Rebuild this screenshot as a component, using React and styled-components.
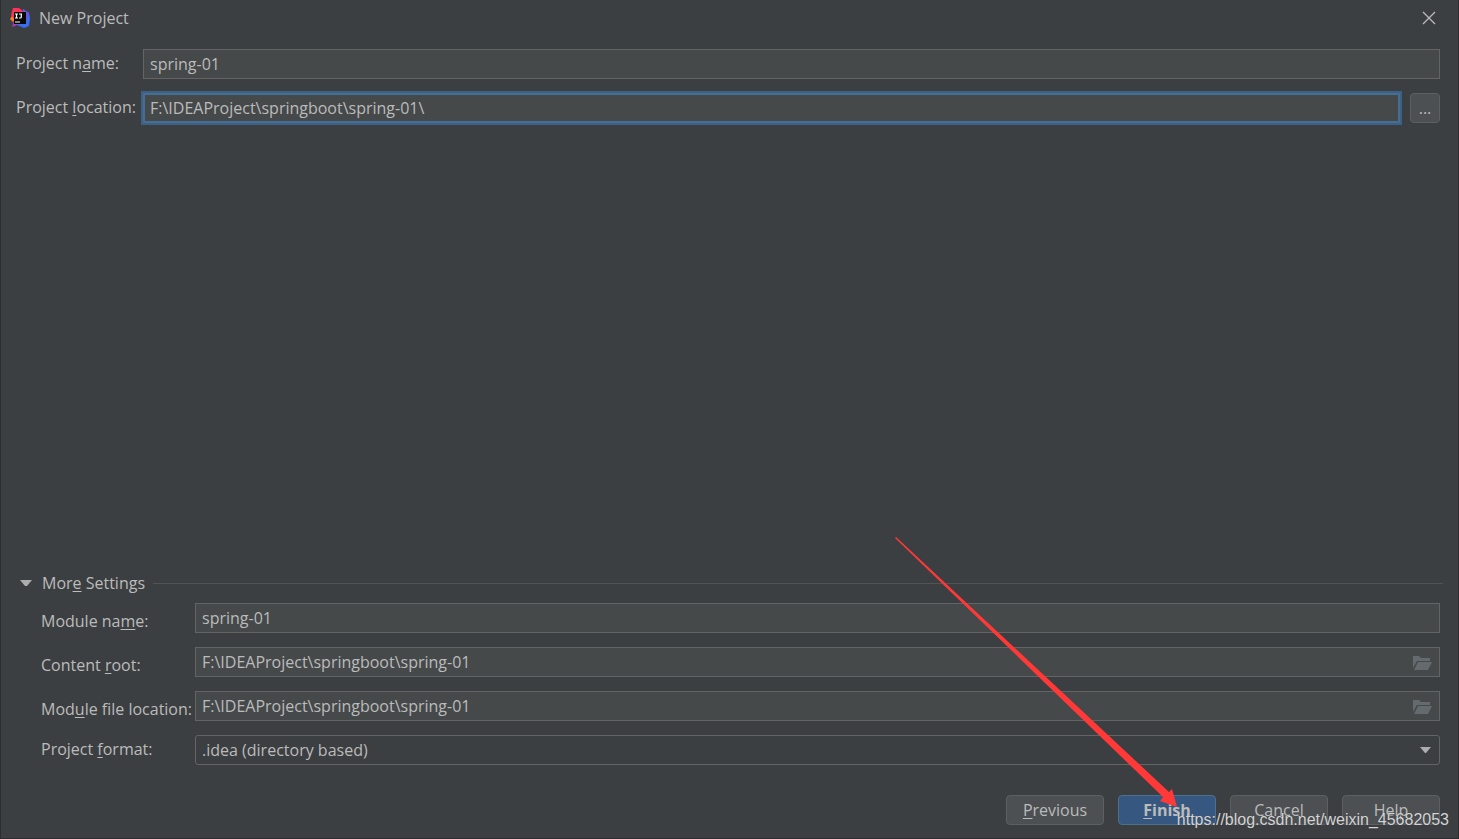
import React, { useState } from 'react';
import styled, { createGlobalStyle } from 'styled-components';

const GlobalStyle = createGlobalStyle`
  * {
    box-sizing: border-box;
  }

  body {
    margin: 0;
    background: #3c3f41;
    color: #bbbbbb;
    font-family: 'Open Sans', 'Noto Sans', sans-serif;
    font-size: 16px;
    line-height: 22px;
  }

  button,
  input,
  select {
    font: inherit;
    color: inherit;
  }
`;

const Dialog = styled.div`
  position: relative;
  min-height: 100vh;
  display: flex;
  flex-direction: column;
  overflow: hidden;
  border: 1px solid #2b2d2f;
  border-top: none;
`;

const TitleBar = styled.header`
  display: flex;
  align-items: center;
  gap: 8px;
  height: 36px;
  padding: 0 22px 0 8px;
`;

const Title = styled.h1`
  flex: 1;
  margin: 0;
  font-size: 16px;
  font-weight: 400;
`;

const CloseButton = styled.button`
  display: flex;
  padding: 0;
  border: none;
  background: none;
`;

const ProjectForm = styled.form`
  flex: 1;
  display: flex;
  flex-direction: column;
  padding: 13px 18px 13px 15px;
`;

const ProjectFields = styled.div`
  display: grid;
  grid-template-columns: 119px 1fr;
  gap: 14px 8px;
`;

const Label = styled.label`
  padding-top: ${(props) => (props.$low ? '7px' : '3px')};
  white-space: nowrap;
`;

const Mnemonic = styled.span`
  text-decoration: underline;
  text-decoration-skip-ink: none;
  text-underline-offset: 2px;
`;

const FieldRow = styled.div`
  display: flex;
  gap: 10px;
`;

const TextField = styled.input`
  flex: 1;
  min-width: 0;
  width: 100%;
  height: 30px;
  padding: 0 7px 1px 6px;
  border: 1px solid ${(props) => (props.$active ? '#466d94' : '#646464')};
  border-radius: 0;
  background: #45494a;
  outline: none;
  box-shadow: ${(props) => (props.$active ? '0 0 0 2px #3d6185, inset 0 0 0 1px #466d94' : 'none')};
`;

const BrowseButton = styled.button`
  width: 30px;
  height: 30px;
  padding: 0;
  border: 1px solid #5e6060;
  border-radius: 4px;
  background: #4c5052;
`;

const PathField = styled.div`
  position: relative;
  display: flex;
`;

const FolderButton = styled.button`
  position: absolute;
  top: 9px;
  right: 8px;
  display: flex;
  padding: 0;
  border: none;
  background: none;
`;

const MoreSettings = styled.section`
  margin-top: auto;
`;

const SectionToggle = styled.button`
  display: flex;
  align-items: center;
  gap: 10px;
  width: 100%;
  padding: 0 0 0 4px;
  border: none;
  background: none;
  text-align: left;
`;

const SectionTitle = styled.span`
  display: flex;
  flex: 1;
  align-items: center;
  gap: 8px;
  margin-right: -3px;
  white-space: pre;

  &::after {
    content: '';
    flex: 1;
    height: 1px;
    background: #515456;
  }
`;

const ModuleFields = styled.div`
  display: grid;
  grid-template-columns: 150px 1fr;
  gap: 14px 4px;
  padding: 9px 0 0 25px;
`;

const SelectBox = styled.div`
  position: relative;
  display: flex;
`;

const Select = styled.select`
  width: 100%;
  height: 30px;
  padding: 0 30px 0 6px;
  border: 1px solid #646464;
  border-radius: 3px;
  background: #3c3f41;
  appearance: none;
  outline: none;
`;

const SelectArrow = styled.svg`
  position: absolute;
  top: 12px;
  right: 9px;
  pointer-events: none;
`;

const Actions = styled.footer`
  display: flex;
  justify-content: flex-end;
  gap: 14px;
  margin-top: 30px;
`;

const ActionButton = styled.button`
  width: 98px;
  height: 30px;
  padding: 0;
  border: 1px solid ${(props) => (props.$primary ? '#4c708c' : '#5e6060')};
  border-radius: 4px;
  background: ${(props) => (props.$primary ? '#365880' : '#4c5052')};
  font-weight: ${(props) => (props.$primary ? 700 : 400)};
`;

const Pointer = styled.svg`
  position: absolute;
  right: 279px;
  bottom: 27px;
  pointer-events: none;
`;

const Watermark = styled.span`
  position: absolute;
  right: 9px;
  bottom: 7px;
  color: #d2d3d4;
  font-family: 'Liberation Sans', Arial, sans-serif;
  text-shadow: 0 1px 1px #3c3f41;
  pointer-events: none;
`;

const AppIcon = () => (
  <svg width="22" height="22" viewBox="0 0 22 22" aria-hidden="true">
    <path d="M4 7 1 12l3 3 4-2z" fill="#fc801d" />
    <path d="M4 1h6l4 3-2 5-7 3-3-4z" fill="#fe315d" />
    <path d="M5 13 3 20l5-2 4-3z" fill="#a93bb5" />
    <path d="M14 2l6 4 1 5-1 8-5 2-7-3 5-6z" fill="#3a6cf0" />
    <path d="M14 2l6 4-1 6-5-3z" fill="#6755dc" />
    <path d="M5 5h12v12H5z" fill="#080808" />
    <path d="M6 7h3M7.5 7v4M6 11h3M10 7h3M12.3 7v3q0 1-1 1H10M6 15h5" stroke="#fff" strokeWidth="1.2" fill="none" />
  </svg>
);

const DownTriangle = () => (
  <svg width="12" height="8" viewBox="0 0 12 8" aria-hidden="true">
    <path d="M0 1h12L7 7H5z" fill="#adadad" />
  </svg>
);

const FolderIcon = () => (
  <svg width="19" height="15" viewBox="0 0 19 15" aria-hidden="true">
    <path d="M0 0h6l2 2h9v3H4L0 12z" fill="#646a6d" />
    <path d="M5 6h14l-4 8H1z" fill="#646a6d" />
  </svg>
);

function App() {
  const [activeField, setActiveField] = useState('location');
  const [expanded, setExpanded] = useState(true);

  return (
    <Dialog>
      <GlobalStyle />
      <TitleBar>
        <AppIcon />
        <Title>New Project</Title>
        <CloseButton aria-label="Close">
          <svg width="14" height="14" viewBox="0 0 14 14" aria-hidden="true">
            <path d="M1 1l12 12M13 1 1 13" stroke="#bbbbbb" strokeWidth="1.3" />
          </svg>
        </CloseButton>
      </TitleBar>
      <ProjectForm onSubmit={(e) => e.preventDefault()}>
        <ProjectFields>
          <Label htmlFor="project-name">Project n<Mnemonic>a</Mnemonic>me:</Label>
          <TextField
            id="project-name"
            defaultValue="spring-01"
            $active={activeField === 'name'}
            onFocus={() => setActiveField('name')}
          />
          <Label htmlFor="project-location">Project <Mnemonic>l</Mnemonic>ocation:</Label>
          <FieldRow>
            <TextField
              id="project-location"
              defaultValue={'F:\\IDEAProject\\springboot\\spring-01\\'}
              $active={activeField === 'location'}
              onFocus={() => setActiveField('location')}
            />
            <BrowseButton type="button">...</BrowseButton>
          </FieldRow>
        </ProjectFields>

        <MoreSettings>
          <SectionToggle type="button" aria-expanded={expanded} onClick={() => setExpanded(!expanded)}>
            <DownTriangle />
            <SectionTitle><span>Mor<Mnemonic>e</Mnemonic> Settings</span></SectionTitle>
          </SectionToggle>
          {expanded && (
            <ModuleFields>
              <Label $low htmlFor="module-name">Module na<Mnemonic>m</Mnemonic>e:</Label>
              <TextField id="module-name" defaultValue="spring-01" />
              <Label $low htmlFor="content-root">Content <Mnemonic>r</Mnemonic>oot:</Label>
              <PathField>
                <TextField id="content-root" defaultValue={'F:\\IDEAProject\\springboot\\spring-01'} />
                <FolderButton type="button" aria-label="Browse content root"><FolderIcon /></FolderButton>
              </PathField>
              <Label $low htmlFor="module-location">Mod<Mnemonic>u</Mnemonic>le file location:</Label>
              <PathField>
                <TextField id="module-location" defaultValue={'F:\\IDEAProject\\springboot\\spring-01'} />
                <FolderButton type="button" aria-label="Browse module file location"><FolderIcon /></FolderButton>
              </PathField>
              <Label htmlFor="project-format">Project <Mnemonic>f</Mnemonic>ormat:</Label>
              <SelectBox>
                <Select id="project-format">
                  <option>.idea (directory based)</option>
                </Select>
                <SelectArrow width="11" height="7" viewBox="0 0 11 7" aria-hidden="true">
                  <path d="M0 0h11L6 6H5z" fill="#adadad" />
                </SelectArrow>
              </SelectBox>
            </ModuleFields>
          )}
        </MoreSettings>

        <Actions>
          <ActionButton type="button"><Mnemonic>P</Mnemonic>revious</ActionButton>
          <ActionButton type="submit" $primary><Mnemonic>F</Mnemonic>inish</ActionButton>
          <ActionButton type="button">Cancel</ActionButton>
          <ActionButton type="button">Help</ActionButton>
        </Actions>
      </ProjectForm>

      <Pointer width="284" height="274" viewBox="0 0 284 274" aria-hidden="true">
        <path d="M0 1 1 0 274 255l3-3 5 18-17-6 3-4z" fill="#ff3838" />
      </Pointer>
      <Watermark>https://blog.csdn.net/weixin_45682053</Watermark>
    </Dialog>
  );
}

export default App;
